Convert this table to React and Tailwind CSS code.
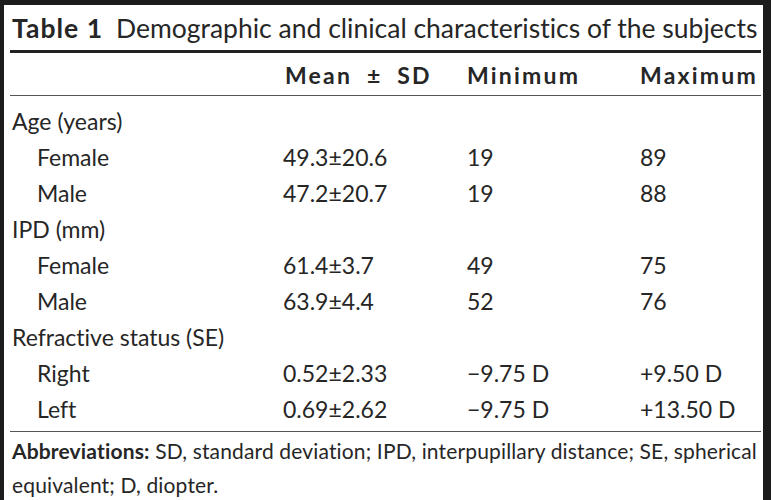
import React from 'react';

const rows = [
    { label: 'Age (years)', group: true },
    { label: 'Female', mean: '49.3±20.6', min: '19', max: '89' },
    { label: 'Male', mean: '47.2±20.7', min: '19', max: '88' },
    { label: 'IPD (mm)', group: true },
    { label: 'Female', mean: '61.4±3.7', min: '49', max: '75' },
    { label: 'Male', mean: '63.9±4.4', min: '52', max: '76' },
    { label: 'Refractive status (SE)', group: true },
    { label: 'Right', mean: '0.52±2.33', min: '−9.75 D', max: '+9.50 D' },
    { label: 'Left', mean: '0.69±2.62', min: '−9.75 D', max: '+13.50 D' },
];

export default function App() {
    return (
        <div className="w-[771px] h-[500px] bg-[#1c1c1c] pt-[5px] pl-[4px] pr-[8px] font-['Lato',sans-serif] text-[#262626] [font-variant-ligatures:none]">
            <div className="bg-white h-full pl-[6px] pr-[2px]">
                {/* Title */}
                <div className="h-[45px] pl-[2px] pt-[2px] flex items-center text-[26.5px] leading-none whitespace-nowrap">
                    <span className="font-bold tracking-[1px] mr-[13px]">Table 1</span>
                    <span>Demographic and clinical characteristics of the subjects</span>
                </div>
                <div className="h-[3px] bg-[#222]" />

                {/* Header */}
                <div className="h-[42px] grid grid-cols-[271px_184px_173px_1fr] items-center pt-[3px] pl-[2px] text-[23px] font-bold tracking-[2.2px] whitespace-nowrap">
                    <div />
                    <div className="pl-[2px] [word-spacing:7px]">Mean ± SD</div>
                    <div>Minimum</div>
                    <div>Maximum</div>
                </div>
                <div className="h-px bg-[#555]" />

                {/* Body */}
                <div className="pt-[7px] pb-[4px] pl-[2px] text-[23px] whitespace-nowrap">
                    {rows.map((r, i) => (
                        <div key={i} className="h-[36px] grid grid-cols-[271px_184px_173px_1fr] items-center">
                            <div className={r.group ? '' : 'pl-[25px]'}>{r.label}</div>
                            <div>{r.mean}</div>
                            <div>{r.min}</div>
                            <div>{r.max}</div>
                        </div>
                    ))}
                </div>
                <div className="h-px bg-[#555]" />

                {/* Footnote */}
                <div className="pt-[2px] pl-[2px] text-[21px] leading-[34px] tracking-[0.15px]">
                    <span className="font-bold">Abbreviations:</span>{' '}SD, standard deviation; IPD, interpupillary distance; SE, spherical equivalent; D, diopter.
                </div>
            </div>
        </div>
    );
}
